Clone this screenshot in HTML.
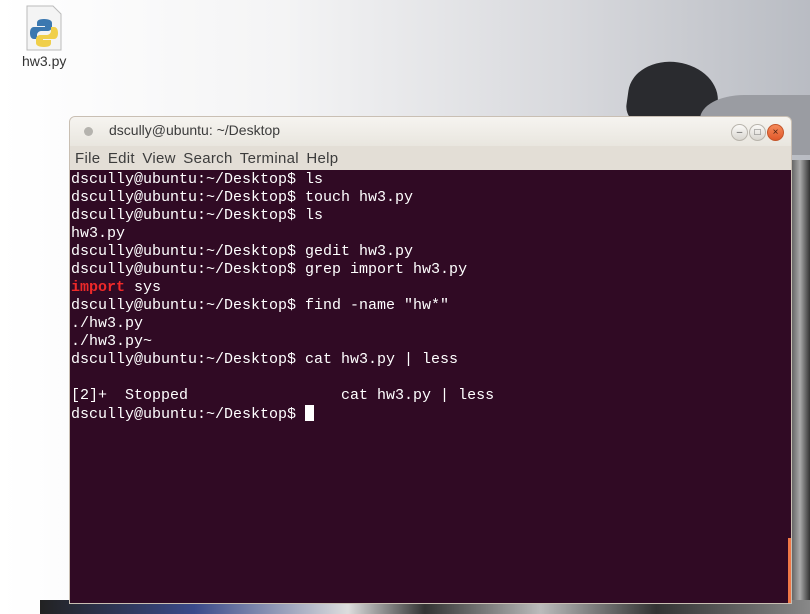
<!DOCTYPE html>
<html><head><style>
html,body{margin:0;width:810px;height:614px;overflow:hidden;}
body{position:relative;font-family:"Liberation Sans",sans-serif;
background:linear-gradient(90deg,#ffffff 0%,#f4f4f5 35%,#d8d9dd 70%,#b9bcc3 100%);}
.bike1{position:absolute;left:628px;top:62px;width:90px;height:70px;background:#2a2b2f;border-radius:50% 50% 20% 30%;transform:rotate(8deg);}
.bike2{position:absolute;left:700px;top:95px;width:110px;height:60px;background:#9a9ca2;border-radius:40% 0 0 0;}
.rside{position:absolute;left:790px;top:160px;width:20px;height:454px;background:linear-gradient(90deg,#555,#aaa,#333);}
.bottom{position:absolute;left:40px;top:600px;width:770px;height:14px;background:linear-gradient(90deg,#222 0%,#3a4a8a 20%,#ddd 40%,#333 50%,#bbb 65%,#333 80%,#888 100%);}
.icon{position:absolute;left:25px;top:5px;width:38px;height:46px;}
.iconlbl{position:absolute;left:22px;top:53px;font-size:14px;color:#333;}
.win{position:absolute;left:69px;top:116px;width:721px;height:486px;border:1px solid #c9bfb3;border-radius:6px 6px 0 0;overflow:hidden;background:#dfdbd2;}
.title{height:29px;background:linear-gradient(#f6f4f0,#e9e6df);position:relative;}
.title .dot{position:absolute;left:14px;top:10px;width:9px;height:9px;border-radius:50%;background:#b5b3ae;}
.title .t{position:absolute;left:39px;top:5px;font-size:14px;color:#3c3c3c;}
.btn{position:absolute;top:7px;width:15px;height:15px;border-radius:50%;background:linear-gradient(#fbfaf8,#d8d5cf);border:1px solid #b8b4ac;font-size:10px;line-height:15px;text-align:center;color:#555;}
.menu{height:24px;background:#e3ded6;font-size:15px;color:#3c3c3c;padding-left:5px;line-height:25px;word-spacing:3px;letter-spacing:0.3px;}
.term{position:absolute;left:0;top:53px;width:721px;height:433px;background:#300a24;overflow:hidden;}
pre{margin:0;padding:1px 0 0 1px;font-family:"Liberation Mono",monospace;font-size:15px;line-height:18px;color:#fff;}
.r{color:#ef2929;font-weight:bold}
.cur{display:inline-block;width:9px;height:16px;background:#fff;vertical-align:-3px}
.sb{position:absolute;left:718px;top:368px;width:3px;height:65px;background:#f07746;}
</style></head><body>
<div class="bike1"></div><div class="bike2"></div><div class="rside"></div><div class="bottom"></div>
<svg class="icon" viewBox="0 0 38 46"><path d="M2 1h26l8 8v36H2z" fill="#f4f4f4" stroke="#bbb"/>
<path d="M19 14c-6 0-7 2-7 4v3h8v1H9c-3 0-4 3-4 6s1 6 4 6h3v-4c0-2 2-4 4-4h7c2 0 4-2 4-4v-4c0-2-2-4-8-4z" fill="#3b78b0"/>
<path d="M19 42c6 0 7-2 7-4v-3h-8v-1h11c3 0 4-3 4-6s-1-6-4-6h-3v4c0 2-2 4-4 4h-7c-2 0-4 2-4 4v4c0 2 2 4 8 4z" fill="#f0cf4a"/></svg>
<div class="iconlbl">hw3.py</div>
<div class="win">
<div class="title"><div class="dot"></div><div class="t">dscully@ubuntu: ~/Desktop</div>
<div class="btn" style="left:661px">–</div><div class="btn" style="left:679px">□</div>
<div class="btn" style="left:697px;background:linear-gradient(#f58a5a,#e0582a);border-color:#c4552a;color:#4a2010">×</div></div>
<div class="menu">File Edit View Search Terminal Help</div>
<div class="term"><pre>dscully@ubuntu:~/Desktop$ ls
dscully@ubuntu:~/Desktop$ touch hw3.py
dscully@ubuntu:~/Desktop$ ls
hw3.py
dscully@ubuntu:~/Desktop$ gedit hw3.py
dscully@ubuntu:~/Desktop$ grep import hw3.py
<span class="r">import</span> sys
dscully@ubuntu:~/Desktop$ find -name "hw*"
./hw3.py
./hw3.py~
dscully@ubuntu:~/Desktop$ cat hw3.py | less

[2]+  Stopped                 cat hw3.py | less
dscully@ubuntu:~/Desktop$ <span class="cur"></span></pre><div class="sb"></div></div>
</div>
</body></html>
